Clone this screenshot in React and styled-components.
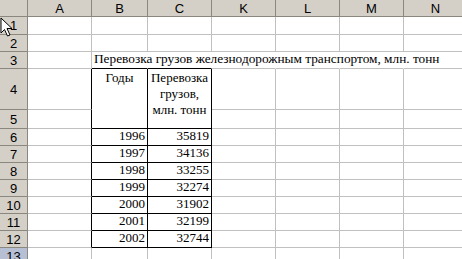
import React from 'react'
import styled, { createGlobalStyle } from 'styled-components'

const GlobalStyle = createGlobalStyle`
  html, body {
    margin: 0;
    padding: 0;
    background: #ffffff;
    overflow: hidden;
  }
`

const COLS = [28, 64, 56, 64, 64, 64, 64, 64]
const ROWS = [17, 18, 17, 17, 41, 19, 17, 17, 17, 17, 17, 17, 17, 17]
const LETTERS = ['A', 'B', 'C', 'K', 'L', 'M', 'N']
const DATA = [
  [1996, 35819],
  [1997, 34136],
  [1998, 33255],
  [1999, 32274],
  [2000, 31902],
  [2001, 32199],
  [2002, 32744],
]

const GRID = '#c0c0c0'
const INK = '#000000'

const Sheet = styled.div`
  position: relative;
  display: grid;
  grid-template-columns: ${COLS.map(c => c + 'px').join(' ')};
  grid-template-rows: ${ROWS.map(r => r + 'px').join(' ')};
  width: 462px;
  height: 259px;
  overflow: hidden;
`

const Head = styled.div`
  box-sizing: border-box;
  background: ${props => props.selected ? '#b6bfd4' : '#d4d0c8'};
  border-right: 1px solid #8a877f;
  border-bottom: 1px solid #8a877f;
  display: flex;
  align-items: center;
  justify-content: center;
  font-family: 'Liberation Sans', Arial, sans-serif;
  font-size: 13px;
  color: #000;
`

const Corner = styled(Head)`
  background: #d4d0c8;
`

const Cell = styled.div`
  box-sizing: border-box;
  border-right: 1px solid ${props => props.right || GRID};
  border-bottom: 1px solid ${props => props.bottom || GRID};
  ${props => props.noRight && 'border-right-color: transparent;'}
  grid-row: ${props => props.span ? `span ${props.span}` : 'auto'};
  display: flex;
  flex-direction: column;
  justify-content: ${props => props.top ? 'flex-start' : 'flex-end'};
  align-items: ${props => props.align || 'flex-end'};
  padding: ${props => props.top ? '1px 2px 0' : '0 2px 1px'};
  font-family: 'Liberation Serif', 'Times New Roman', serif;
  font-size: 13px;
  line-height: 16px;
  color: #000;
  white-space: nowrap;
  min-width: 0;
`

const Title = styled.span`
  display: block;
  width: 0;
  overflow: visible;
  white-space: nowrap;
  font-size: 13.3px;
`

const Cursor = styled.svg`
  position: absolute;
  left: 0;
  top: 17px;
`

export default function App() {
  const rows = []
  for (let r = 1; r <= 13; r++) {
    rows.push(<Head key={'h' + r} selected={r === 13}>{r}</Head>)
    const inTable = r >= 4 && r <= 12
    // column A
    rows.push(<Cell key={'a' + r} right={inTable ? INK : undefined} />)
    if (r === 3) {
      rows.push(
        <Cell key="b3" bottom={INK} noRight align="flex-start">
          <Title>Перевозка грузов железнодорожным транспортом, млн. тонн</Title>
        </Cell>
      )
      rows.push(<Cell key="c3" bottom={INK} noRight />)
      for (let k = 0; k < 4; k++) rows.push(<Cell key={'x3' + k} noRight />)
      continue
    }
    if (r === 4) {
      rows.push(
        <Cell key="b4" span={2} right={INK} bottom={INK} top align="center">
          Годы
        </Cell>
      )
      rows.push(
        <Cell key="c4" span={2} right={INK} bottom={INK} top align="center">
          <span>Перевозка</span>
          <span>грузов,</span>
          <span>млн. тонн</span>
        </Cell>
      )
    } else if (r === 5) {
      // merged above
    } else if (inTable) {
      const [year, value] = DATA[r - 6]
      rows.push(<Cell key={'b' + r} right={INK} bottom={INK}>{year}</Cell>)
      rows.push(<Cell key={'c' + r} right={INK} bottom={INK}>{value}</Cell>)
    } else {
      rows.push(<Cell key={'b' + r} />)
      rows.push(<Cell key={'c' + r} />)
    }
    for (let k = 0; k < 4; k++) rows.push(<Cell key={'x' + r + k} />)
  }

  return (
    <>
      <GlobalStyle />
      <Sheet>
        <Corner />
        {LETTERS.map(l => <Head key={l}>{l}</Head>)}
        {rows}
        <Cursor width="13" height="20" viewBox="0 0 13 20">
          <polygon
            points="1,1 1,16 4.5,12.5 7.5,19 10,18 7,11.5 12,11.5"
            fill="#fff"
            stroke="#000"
            strokeWidth="1"
            strokeLinejoin="miter"
          />
        </Cursor>
      </Sheet>
    </>
  )
}
